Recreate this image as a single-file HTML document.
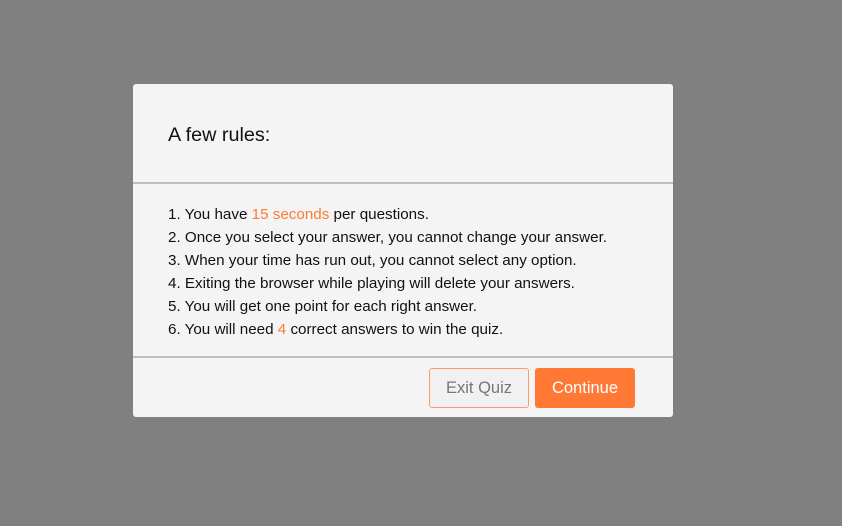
<!DOCTYPE html>
<html><head><style>
html,body{margin:0;padding:0;width:842px;height:526px;background:#808080;font-family:"Liberation Sans",sans-serif;overflow:hidden}
.box{position:absolute;left:133px;top:84px;width:540px;height:333px;background:#f4f4f4;border-radius:3px}
.h{position:absolute;left:35px;top:40px;font-size:19.8px;color:#111}
.l1{position:absolute;left:0;top:98px;width:540px;height:2px;background:#bdbdbd}
.l2{position:absolute;left:0;top:272px;width:540px;height:2px;background:#bdbdbd}
.list{position:absolute;left:35px;top:119px;font-size:15.2px;line-height:23px;color:#111;white-space:nowrap}
.o{color:#ff7a35}
.b{position:absolute;top:284px;width:100px;height:40px;box-sizing:border-box;border-radius:3px;font-size:16.5px;text-align:center;line-height:39px}
.e{left:296px;border:1px solid #ff9c6b;color:#777;background:#f1f1f1}
.c{left:402px;background:#ff7935;color:#fff;border:1px solid #ff7935}
</style></head><body>
<div class="box">
<div class="h">A few rules:</div>
<div class="l1"></div>
<div class="list">
1. You have <span class="o">15 seconds</span> per questions.<br>
2. Once you select your answer, you cannot change your answer.<br>
3. When your time has run out, you cannot select any option.<br>
4. Exiting the browser while playing will delete your answers.<br>
5. You will get one point for each right answer.<br>
6. You will need <span class="o">4</span> correct answers to win the quiz.
</div>
<div class="l2"></div>
<div class="b e">Exit Quiz</div>
<div class="b c">Continue</div>
</div>
</body></html>
